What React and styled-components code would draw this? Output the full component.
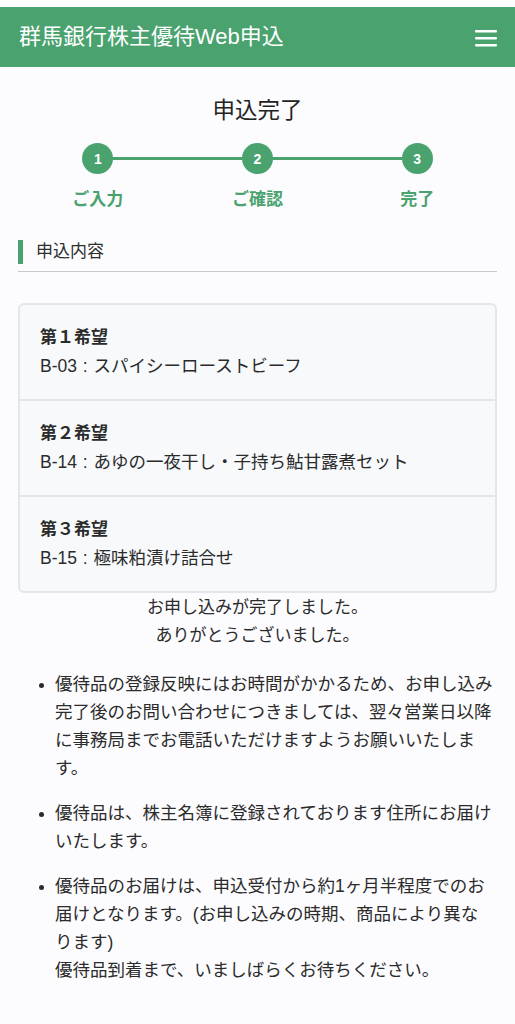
import React from 'react';
import styled, { createGlobalStyle } from 'styled-components';

const GREEN = '#4aa26f';
const TEXT = '#2b2b2b';

const GlobalStyle = createGlobalStyle`
  html, body {
    margin: 0;
    padding: 0;
    background: #fcfcfe;
  }
  body {
    font-family: "Liberation Sans", "Noto Sans CJK JP", sans-serif;
    color: ${TEXT};
  }
  * { box-sizing: border-box; }
`;

const steps = ['ご入力', 'ご確認', '完了'];

const choices = [
  { rank: '第１希望', item: 'B-03 : スパイシーローストビーフ' },
  { rank: '第２希望', item: 'B-14 : あゆの一夜干し・子持ち鮎甘露煮セット' },
  { rank: '第３希望', item: 'B-15 : 極味粕漬け詰合せ' },
];

export default function App() {
  return (
    <>
      <GlobalStyle />
      <Page>
        <Header>
          <Brand>群馬銀行株主優待Web申込</Brand>
          <MenuButton aria-label="menu">
            <svg width="22" height="18" viewBox="0 0 22 18">
              <rect x="0" y="1" width="22" height="2.6" rx="1" fill="#fff" />
              <rect x="0" y="8" width="22" height="2.6" rx="1" fill="#fff" />
              <rect x="0" y="15" width="22" height="2.6" rx="1" fill="#fff" />
            </svg>
          </MenuButton>
        </Header>

        <Main>
          <PageTitle>申込完了</PageTitle>

          <Stepper>
            {steps.map((label, i) => (
              <Step key={label}>
                <StepDot>{i + 1}</StepDot>
                <StepLabel>{label}</StepLabel>
              </Step>
            ))}
          </Stepper>

          <SectionHead>
            <SectionTitle>申込内容</SectionTitle>
          </SectionHead>

          <ChoiceCard>
            {choices.map((c) => (
              <ChoiceRow key={c.rank}>
                <ChoiceRank>{c.rank}</ChoiceRank>
                <ChoiceItem>{c.item}</ChoiceItem>
              </ChoiceRow>
            ))}
          </ChoiceCard>

          <Thanks>
            お申し込みが完了しました。
            <br />
            ありがとうございました。
          </Thanks>

          <Notes>
            <li>
              優待品の登録反映にはお時間がかかるため、お申し込み完了後のお問い合わせにつきましては、翌々営業日以降に事務局までお電話いただけますようお願いいたします。
            </li>
            <li>優待品は、株主名簿に登録されております住所にお届けいたします。</li>
            <li>
              優待品のお届けは、申込受付から約1ヶ月半程度でのお届けとなります。(お申し込みの時期、商品により異なります)
              <br />
              優待品到着まで、いましばらくお待ちください。
            </li>
          </Notes>
        </Main>
      </Page>
    </>
  );
}

const Page = styled.div`
  padding-top: 7px;
  background: linear-gradient(#ffffff 0 7px, #fcfcfe 7px);
  min-height: 1024px;
`;

const Header = styled.header`
  height: 60px;
  background: ${GREEN};
  display: flex;
  align-items: center;
  justify-content: space-between;
  padding: 0 18px 0 19px;
`;

const Brand = styled.div`
  color: #fff;
  font-size: 22px;
  line-height: 1;
`;

const MenuButton = styled.button`
  border: 0;
  background: none;
  padding: 0;
  display: flex;
  margin-top: 1px;
`;

const Main = styled.main`
  padding: 0 18px;
`;

const PageTitle = styled.h1`
  margin: 27px 0 0;
  text-align: center;
  font-size: 22.5px;
  font-weight: 400;
  line-height: 33px;
  color: #222;
`;

const Stepper = styled.div`
  position: relative;
  display: grid;
  grid-template-columns: repeat(3, 1fr);
  margin-top: 16px;

  &::before {
    content: '';
    position: absolute;
    left: 16.66%;
    right: 16.66%;
    top: 14px;
    height: 3px;
    background: ${GREEN};
  }
`;

const Step = styled.div`
  display: flex;
  flex-direction: column;
  align-items: center;
  position: relative;
`;

const StepDot = styled.div`
  width: 31px;
  height: 31px;
  border-radius: 50%;
  background: ${GREEN};
  color: #fff;
  font-weight: 700;
  font-size: 14px;
  display: flex;
  align-items: center;
  justify-content: center;
`;

const StepLabel = styled.div`
  margin-top: 13px;
  color: ${GREEN};
  font-weight: 700;
  font-size: 17px;
  line-height: 26px;
`;

const SectionHead = styled.div`
  margin-top: 27px;
  padding-bottom: 7px;
  border-bottom: 1px solid #c9c9c9;
`;

const SectionTitle = styled.h2`
  margin: 0;
  border-left: 5px solid ${GREEN};
  padding-left: 13px;
  font-size: 17px;
  font-weight: 400;
  line-height: 24px;
  color: #2e2e2e;
`;

const ChoiceCard = styled.div`
  margin-top: 31px;
  border: 2px solid #e4e6e9;
  border-radius: 6px;
  background: #f7f9fb;
  overflow: hidden;
`;

const ChoiceRow = styled.div`
  padding: 18px 20px 18px;

  & + & {
    border-top: 2px solid #e4e6e9;
  }
`;

const ChoiceRank = styled.div`
  font-weight: 700;
  font-size: 17px;
  line-height: 29px;
`;

const ChoiceItem = styled.div`
  font-size: 17.5px;
  line-height: 29px;
  word-spacing: 1px;
`;

const Thanks = styled.p`
  margin: 1px 0 0;
  text-align: center;
  font-size: 17px;
  line-height: 28px;
`;

const Notes = styled.ul`
  margin: 20px 0 0;
  padding: 0 4px 0 37px;
  font-size: 17.5px;
  line-height: 28px;

  li {
    margin-bottom: 17px;
  }
  li::marker {
    font-size: 15px;
  }
`;
